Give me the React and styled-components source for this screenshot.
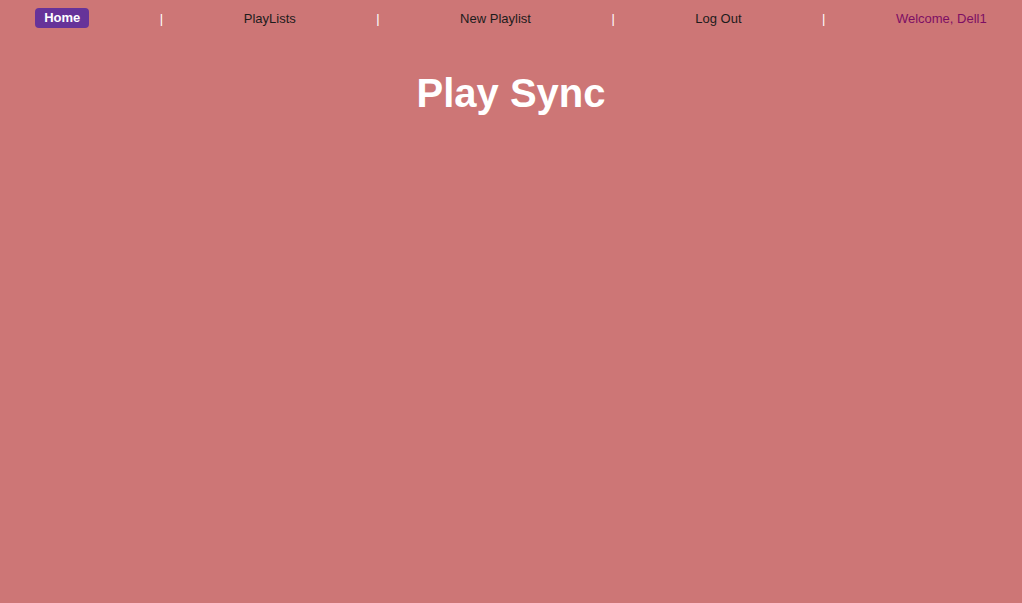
import React from "react";
import styled, { createGlobalStyle } from "styled-components";

const Global = createGlobalStyle`
  html, body {
    margin: 0;
    padding: 0;
    background: #cd7676;
    font-family: "Liberation Sans", Arial, sans-serif;
  }
  body { min-height: 603px; }
`;

const Page = styled.div`
  min-height: 603px;
  background: #cd7676;
`;

const Nav = styled.nav`
  display: flex;
  justify-content: space-around;
  align-items: center;
  padding: 8px 0;
  font-size: 13px;
`;

const HomeButton = styled.a`
  display: inline-block;
  background: #663399;
  color: #fff;
  font-weight: bold;
  padding: 2px 9px 3px;
  border-radius: 4px;
  line-height: 15px;
  text-decoration: none;
`;

const NavLink = styled.a`
  color: #1c1c1c;
  padding: 0 10px;
  line-height: 15px;
  text-decoration: none;
`;

const Sep = styled.span`
  color: #fff;
  line-height: 15px;
`;

const Welcome = styled.span`
  color: #7d0f64;
  line-height: 15px;
`;

const Title = styled.h1`
  margin: 35px 0 0;
  text-align: center;
  color: #fff;
  font-size: 40px;
  font-weight: bold;
`;

export default function App() {
  return (
    <Page>
      <Global />
      <Nav>
        <HomeButton href="#">Home</HomeButton>
        <Sep>|</Sep>
        <NavLink href="#">PlayLists</NavLink>
        <Sep>|</Sep>
        <NavLink href="#">New Playlist</NavLink>
        <Sep>|</Sep>
        <NavLink href="#">Log Out</NavLink>
        <Sep>|</Sep>
        <Welcome>Welcome, Dell1</Welcome>
      </Nav>
      <Title>Play Sync</Title>
    </Page>
  );
}
